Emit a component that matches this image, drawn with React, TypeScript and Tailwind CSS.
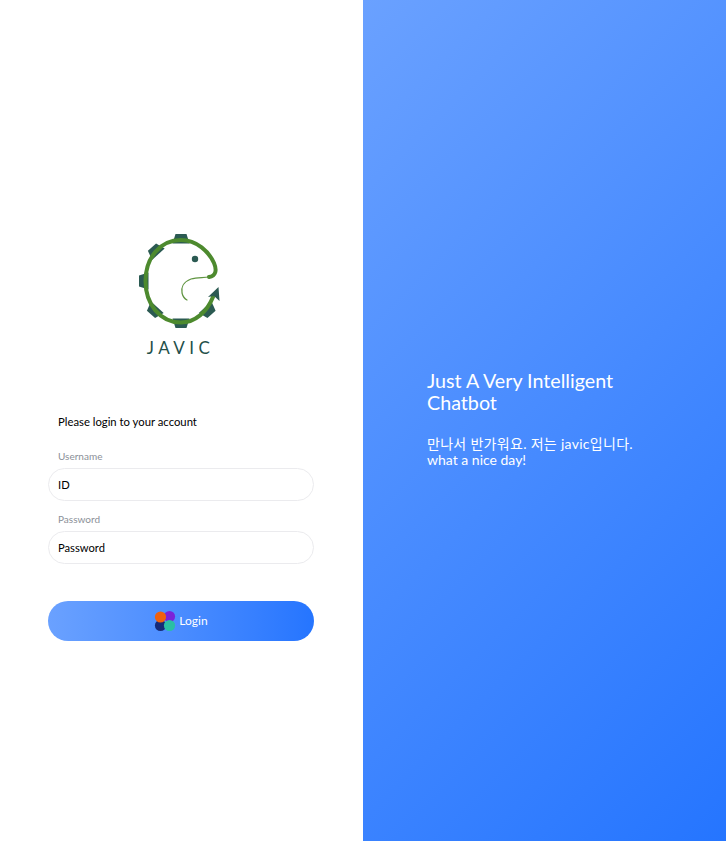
function Tooth({ x, y, a }: { x: number; y: number; a: number }) {
  return <polygon points="-8.5,5 -5.5,-4.5 5.5,-4.5 8.5,5" fill="#2b5a52" transform={`translate(${x} ${y}) rotate(${a})`} />;
}

function Logo() {
  return (
    <svg viewBox="131 228 100 100" width="100" height="100" className="block">
      {/* gear teeth */}
      <Tooth x={181} y={236.5} a={0} />
      <Tooth x={155} y={248.5} a={-42} />
      <Tooth x={143.5} y={279} a={-90} />
      <Tooth x={154} y={309} a={-138} />
      <Tooth x={181} y={321.5} a={180} />
      <Tooth x={208.5} y={309} a={138} />
      {/* ring and head */}
      <path
        d="M213 295 C207 310 195 320.5 181 320.5 C160 320.5 145.5 302 145.5 279 C145.5 256 160 238 181 238 C197 238 209 250 214 261 C217 268 216 274 209 275"
        fill="none"
        stroke="#4d8a2e"
        strokeWidth="4"
        strokeLinecap="round"
      />
      {/* tail */}
      <path
        d="M209 275 C203 276 197 275 191 277 C183 280 181 286 182 291 C183 295 185 297 187 298"
        fill="none"
        stroke="#5f9440"
        strokeWidth="1.2"
        strokeLinecap="round"
      />
      <polygon points="218.5,285 219.5,299 214,294 208,295" fill="#2b5a52" />
      <circle cx="195" cy="257" r="3.2" fill="#2b5a52" />
    </svg>
  );
}

function LoginIcon() {
  return (
    <svg viewBox="0 0 22 22" width="22" height="22" className="block">
      <defs>
        <filter id="soft" filterUnits="userSpaceOnUse" x="-3" y="-3" width="28" height="28">
          <feGaussianBlur stdDeviation="0.7" />
        </filter>
      </defs>
      <g filter="url(#soft)">
        <circle cx="15.5" cy="6.5" r="5.6" fill="#7c22d8" />
        <circle cx="6.5" cy="15.5" r="5.6" fill="#172a78" />
        <circle cx="15.5" cy="15.5" r="5.6" fill="#2bbfa4" />
        <circle cx="6.5" cy="7" r="5.6" fill="#f0600f" />
      </g>
    </svg>
  );
}

function Field({ label, value }: { label: string; value: string }) {
  return (
    <div>
      <label className="block pl-[10px] text-[10px] leading-[15px] text-[#8b9098]">{label}</label>
      <input
        defaultValue={value}
        className="mt-[4px] block h-[33px] w-full rounded-full border border-[#ebebee] bg-white px-[9px] text-[11.2px] text-black outline-none"
      />
    </div>
  );
}

export default function App() {
  return (
    <div className="flex h-[841px] w-[726px] overflow-hidden bg-white font-['Lato','Noto_Sans_CJK_KR',sans-serif]">
      <div className="flex w-[363px] flex-col pl-[48px] pr-[49px] pt-[230px]">
        <div className="flex flex-col items-center">
          <Logo />
          <p className="mt-[7px] pr-[1px] text-[17px] leading-[22px] tracking-[4.5px] text-[#24504a]">
            JAVIC
          </p>
        </div>
        <p className="mt-[54px] pl-[10px] text-[11.3px] leading-[18px] text-black">Please login to your account</p>
        <div className="mt-[18px]">
          <Field label="Username" value="ID" />
        </div>
        <div className="mt-[11px]">
          <Field label="Password" value="Password" />
        </div>
        <button className="mt-[37px] flex h-[40px] w-full items-center justify-center gap-[3px] rounded-full bg-gradient-to-r from-[#6aa1ff] to-[#2575ff] text-[12px] text-white">
          <LoginIcon />
          Login
        </button>
      </div>
      <div className="flex h-full w-[363px] flex-col bg-[linear-gradient(135deg,#6aa1ff_0%,#2575ff_100%)] pl-[64px] pr-[80px] pt-[370px] text-white">
        <h1 className="text-[19.7px] leading-[22px] font-normal">Just A Very Intelligent Chatbot</h1>
        <p className="mt-[22px] text-[14px] leading-[16px]">
          <span className="tracking-[0.3px]">만나서 반가워요. 저는 javic입니다.</span>
          <br />
          what a nice day!
        </p>
      </div>
    </div>
  );
}
